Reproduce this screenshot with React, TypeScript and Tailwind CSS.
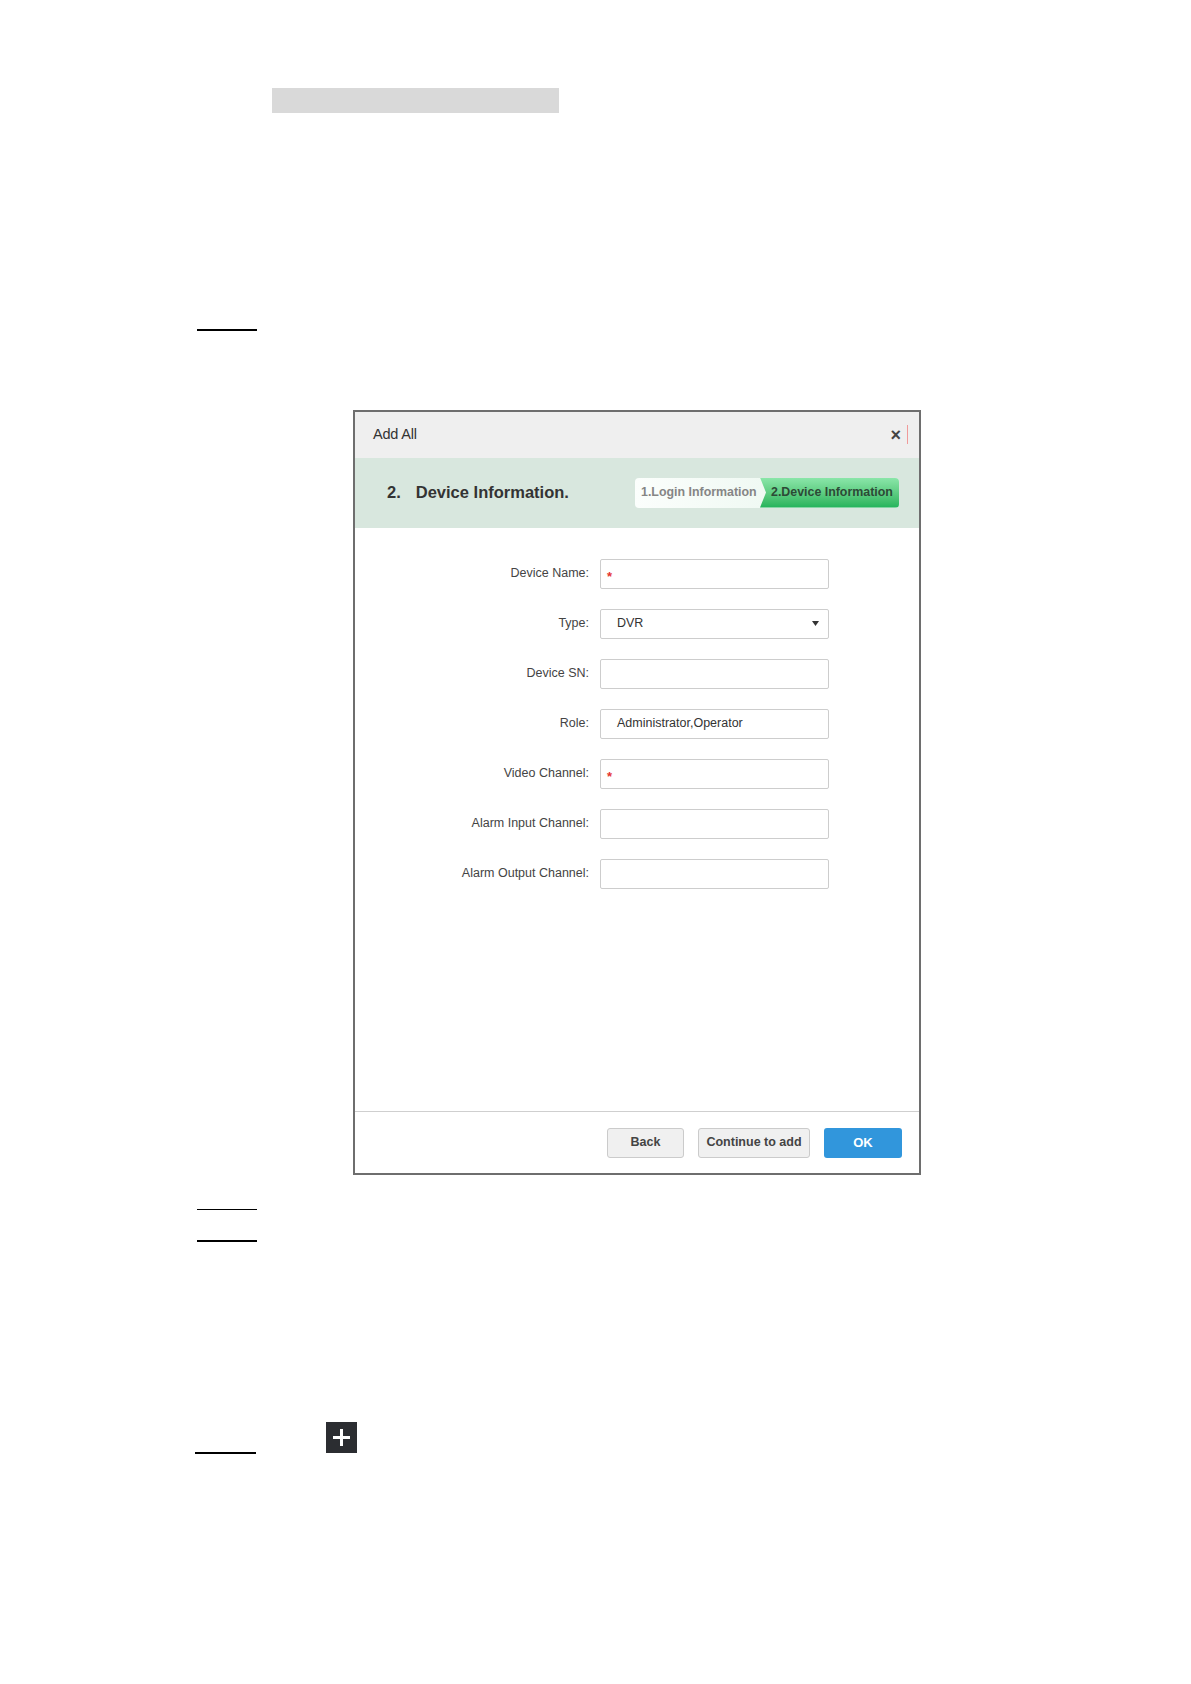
import React from "react";

const FONT = { fontFamily: '"Liberation Sans", Arial, sans-serif' };

type Field = { label: string; value?: string; required?: boolean; select?: boolean };

const fields: Field[] = [
  { label: "Device Name:", required: true },
  { label: "Type:", value: "DVR", select: true },
  { label: "Device SN:" },
  { label: "Role:", value: "Administrator,Operator" },
  { label: "Video Channel:", required: true },
  { label: "Alarm Input Channel:" },
  { label: "Alarm Output Channel:" },
];

function FormRow({ field }: { field: Field }) {
  return (
    <div className="flex items-center h-[30px] mb-[20px]">
      <div className="w-[245px] pr-[11px] text-right text-[12.5px] text-[#444]">{field.label}</div>
      <div className="relative flex items-center w-[229px] h-[30px] border border-[#cdcdcd] rounded-[2px] bg-white">
        {field.required && (
          <span className="absolute left-[6px] top-[10px] text-[13px] font-bold leading-none text-[#e5342f]">*</span>
        )}
        {field.value && <span className="pl-[16px] text-[12.5px] text-[#333]">{field.value}</span>}
        {field.select && (
          <svg className="absolute right-[9px] top-[11px]" width="7" height="5" viewBox="0 0 7 5">
            <path d="M0 0 L7 0 L3.5 5 Z" fill="#333" />
          </svg>
        )}
      </div>
    </div>
  );
}

function StepIndicator() {
  return (
    <div className="flex h-[30px] rounded-[4px] overflow-hidden bg-gradient-to-r from-[#fbfefc] to-[#e4f4ea]">
      <div className="flex items-center w-[125px] pl-[6px] text-[12.4px] font-bold text-[#858585] whitespace-nowrap">
        1.Login Information
      </div>
      <div className="flex items-center w-[139px] pl-[11px] text-[12.4px] font-bold text-[#2c4a36] whitespace-nowrap bg-gradient-to-b from-[#8ae6a9] to-[#1fb35a] [clip-path:polygon(0_0,100%_0,100%_100%,0_100%,6px_50%)]">
        2.Device Information
      </div>
    </div>
  );
}

function AddAllDialog() {
  return (
    <div className="ml-[353px] w-[568px] h-[765px] border-2 border-[#6e6e6e] flex flex-col bg-white">
      <div className="flex items-center h-[46px] bg-[#efefef] pl-[18px] pr-[11px]">
        <span className="text-[14.5px] text-[#333] tracking-[-0.2px]">Add All</span>
        <div className="ml-auto flex items-center">
          <span className="text-[18px] font-bold text-[#444] leading-none">×</span>
          <span className="ml-[6px] w-px h-[19px] bg-[#f09a9a]" />
        </div>
      </div>
      <div className="flex items-center h-[70px] bg-[#d8e7de] pl-[32px] pr-[20px]">
        <span className="text-[16.5px] font-bold text-[#333]">2.</span>
        <span className="ml-[15px] text-[16.5px] font-bold text-[#333]">Device Information.</span>
        <div className="ml-auto">
          <StepIndicator />
        </div>
      </div>
      <div className="flex-1 pt-[31px]">
        {fields.map((f) => (
          <FormRow key={f.label} field={f} />
        ))}
      </div>
      <div className="h-[62px] border-t border-[#cfcfcf] flex items-start justify-end pt-[16px] pr-[17px] gap-[14px]">
        <button className="w-[77px] h-[30px] rounded-[3px] border border-[#cbcbcb] bg-[#f0f0f0] text-[12.5px] font-bold text-[#444]">
          Back
        </button>
        <button className="w-[112px] h-[30px] rounded-[3px] border border-[#cbcbcb] bg-[#f0f0f0] text-[12.5px] font-bold text-[#444]">
          Continue to add
        </button>
        <button className="w-[78px] h-[30px] rounded-[3px] bg-[#3196dc] text-[13px] font-bold text-white">OK</button>
      </div>
    </div>
  );
}

export default function App() {
  return (
    <div className="w-[1191px] min-h-[1684px] bg-white pt-[88px]" style={FONT}>
      <div className="ml-[272px] w-[287px] h-[25px] bg-[#d9d9d9]" />
      <div className="mt-[216px] ml-[197px] w-[60px] h-[1.5px] bg-black" />
      <div className="mt-[79px]">
        <AddAllDialog />
      </div>
      <div className="mt-[34px] ml-[197px] w-[60px] h-[1.5px] bg-black" />
      <div className="mt-[30px] ml-[197px] w-[60px] h-[1.5px] bg-black" />
      <div className="mt-[180px] flex items-end">
        <div className="ml-[195px] w-[61px] h-[1.5px] bg-black" />
        <div className="ml-[70px] mb-[1px] w-[31px] h-[31px] bg-[#2b2d31] flex items-center justify-center">
          <svg width="21" height="21" viewBox="0 0 21 21">
            <path d="M10.5 2 V19 M2 10.5 H19" stroke="#fff" strokeWidth="3" />
          </svg>
        </div>
      </div>
    </div>
  );
}
